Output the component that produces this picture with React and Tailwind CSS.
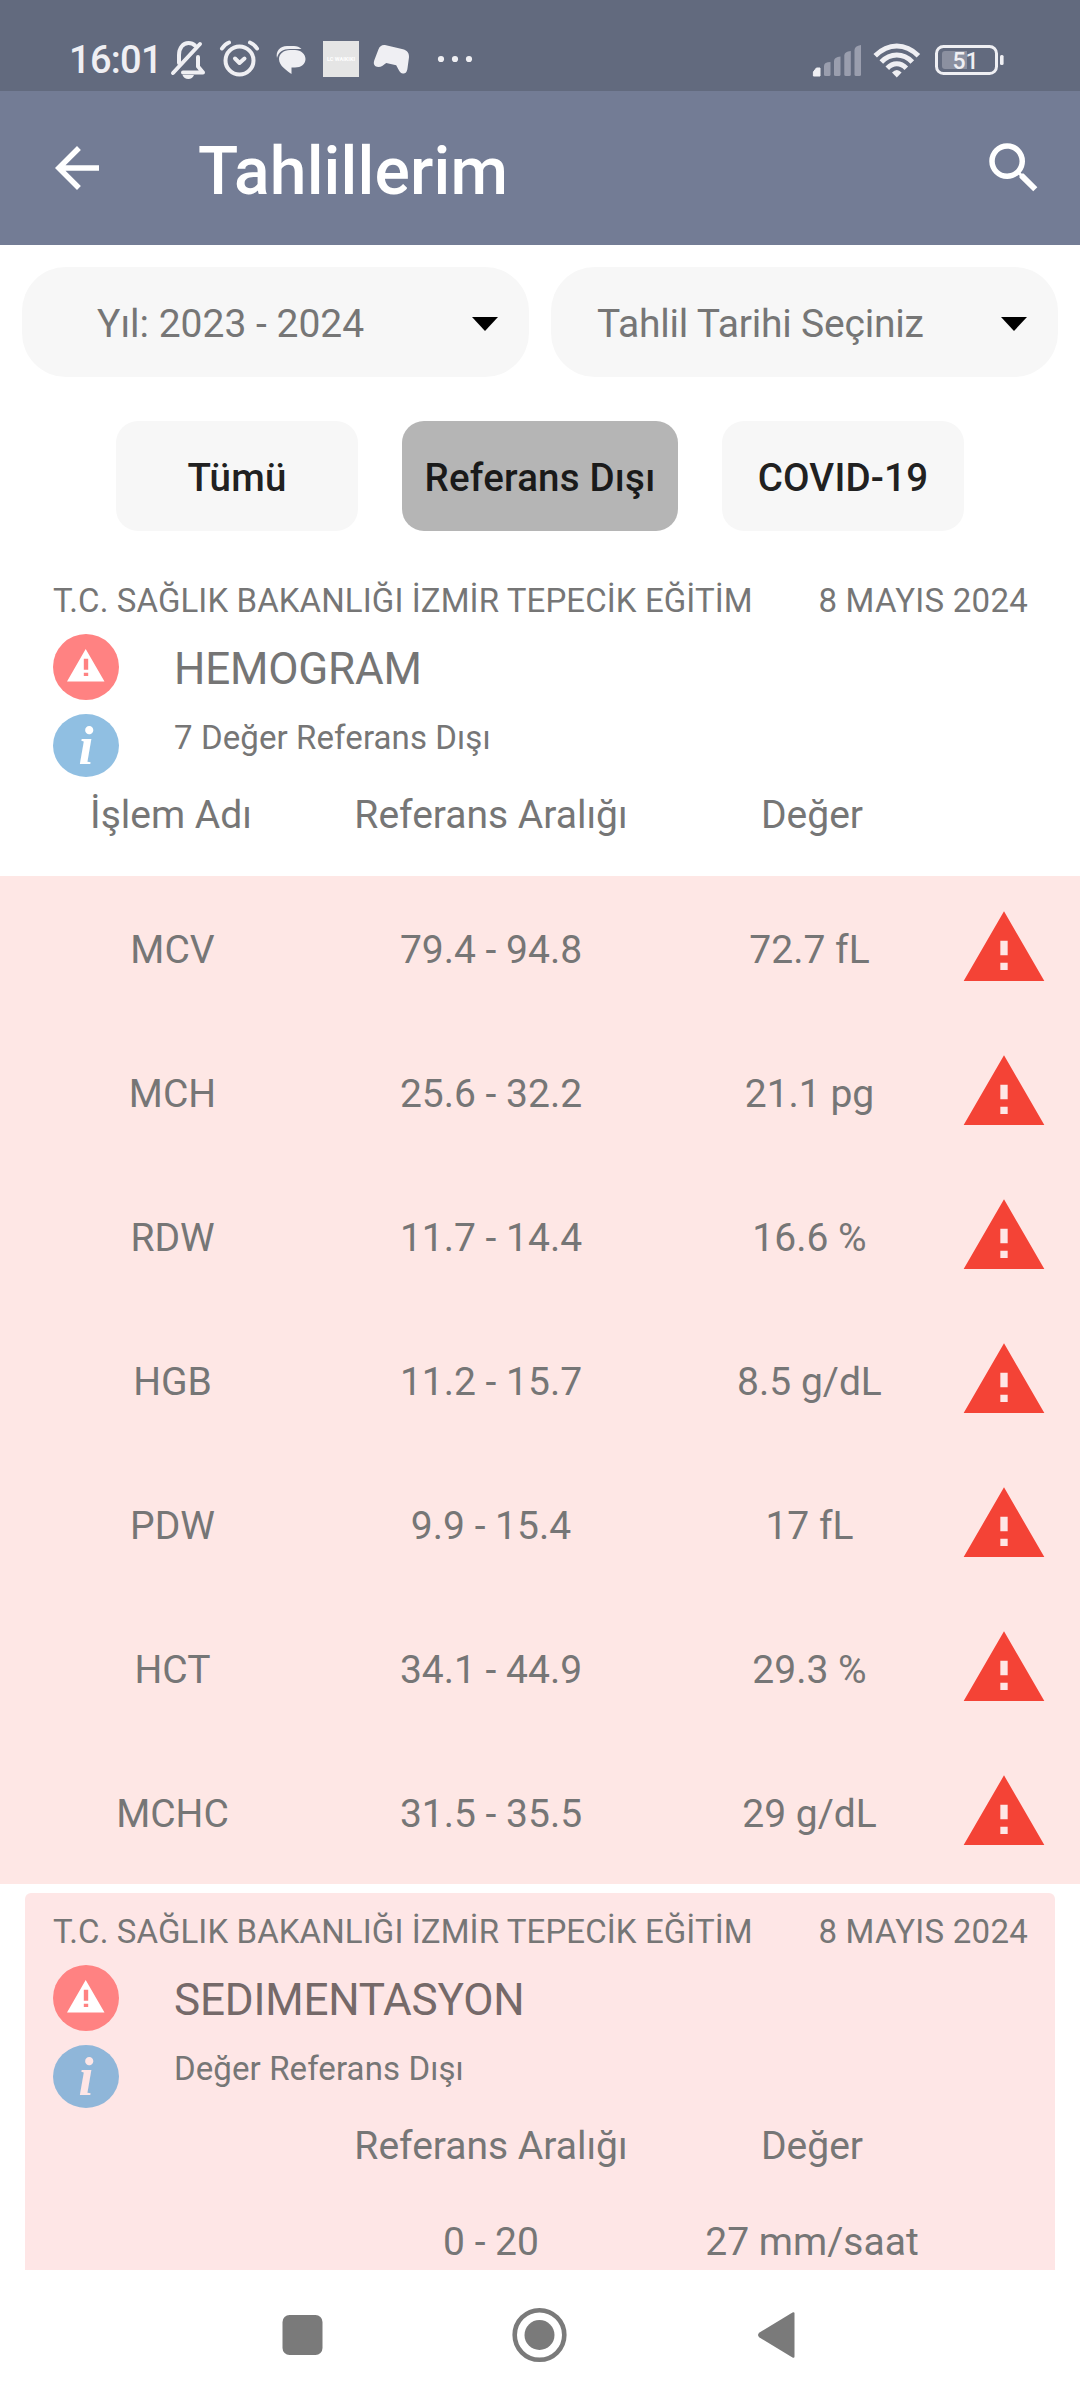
import React, { useState } from "react";
import { MdArrowBack, MdSearch, MdWarning } from "react-icons/md";

const hemogram = [
  { name: "MCV", range: "79.4 - 94.8", value: "72.7 fL" },
  { name: "MCH", range: "25.6 - 32.2", value: "21.1 pg" },
  { name: "RDW", range: "11.7 - 14.4", value: "16.6 %" },
  { name: "HGB", range: "11.2 - 15.7", value: "8.5 g/dL" },
  { name: "PDW", range: "9.9 - 15.4", value: "17 fL" },
  { name: "HCT", range: "34.1 - 44.9", value: "29.3 %" },
  { name: "MCHC", range: "31.5 - 35.5", value: "29 g/dL" },
];

const StatusIcons = () => (
  <svg width="310" height="44" viewBox="168 38 310 44" fill="#efeff3">
    {/* muted bell */}
    <g fill="none" stroke="#efeff3" strokeWidth="4" strokeLinecap="round" strokeLinejoin="round">
      <path d="M179 63V55c0-7 4-12 9.500-12 3 0 5 1 6.500 2.500" />
      <path d="M173 73L200 44" />
      <path d="M183 72.500h20l-5-6V57" />
    </g>
    <path d="M182.500 75h11.500c-1 2.500-3 4-5.700 4s-4.800-1.500-5.800-4z" />
    {/* alarm */}
    <g fill="none" stroke="#efeff3" strokeWidth="4" strokeLinecap="round" strokeLinejoin="round">
      <circle cx="239.500" cy="60.500" r="14" />
      <path d="M235 58.500l4.500 4.500 5-4.500" />
      <path d="M222 48.500q3-4.500 7-6M257 48.500q-3-4.500-7-6" />
    </g>
    {/* messages */}
    <path d="M277 58c-1.500-7 3-12 10-12h7c3 0 5.500 1 7.500 3H290c-7 0-11.500 3-13 9z" />
    <path d="M290 50h5c6 0 10.500 4 10.500 9s-4.500 8.500-10.500 8.500h-3.500V74c-4.500-3.500-12.500-8-12.500-15 0-5 4.500-9 11-9z" />
    <rect x="323" y="41" width="36" height="36" fill="#e5e5e5" />
    <text x="341" y="61" fontSize="5.500" textAnchor="middle" textLength="28" fill="#fff" fontFamily="Roboto" fontWeight="700">LC WAIKIKI</text>
    {/* gamepad */}
    <path d="M386 45.200l17 4c4.500 1.300 6.200 4 6 8l-1.500 11c-.6 4-2 5.300-4.500 5.300-2 0-3.200-1.500-4-3l-2.800-5.200-10-2.300-4 3c-2 1.300-5 1.300-6.700.2-2-1.300-2-3.800-1.200-6l4-10.500c1.500-4 4-5.300 7.700-4.500z" />
    <circle cx="441" cy="59" r="3.100" />
    <circle cx="455" cy="59" r="3.100" />
    <circle cx="469" cy="59" r="3.100" />
  </svg>
);

const SystemIcons = () => (
  <svg width="192" height="40" viewBox="812 39 192 40">
    <path d="M813.400 75v-4l3-4h3.600v8z" fill="#efeff3" stroke="#efeff3" strokeLinejoin="round" />
    <g fill="#9a9eae">
      <path d="M824 73.500V65q0-4 6.500-4v12.500q0 1.500-1.500 1.500h-3.500q-1.500 0-1.500-1.500z" />
      <path d="M834 73.500V60q0-4 6.500-4.500v18q0 1.500-1.500 1.500h-3.500q-1.500 0-1.500-1.500z" />
      <path d="M844.300 73.500V54.500q0-4 6.500-4.500v23.500q0 1.500-1.500 1.500h-3.500q-1.500 0-1.500-1.500z" />
      <path d="M854.500 73.500V49q0-4 6.500-5v29.500q0 1.500-1.500 1.500h-3.500q-1.500 0-1.500-1.500z" />
    </g>
    <g fill="none" stroke="#efeff3" strokeWidth="5">
      <path d="M875.200 54.800Q885 45 896.800 45t21.600 9.800" />
      <path d="M881.300 61Q888 54 896.800 54t15.500 7" />
      <path d="M887.300 67.200Q891.500 62.800 896.800 62.800t9.500 4.400" />
    </g>
    <path d="M892 71.500q4.800-5 9.600 0L896.800 76.500z" fill="#efeff3" />
    <rect x="936.500" y="45.500" width="60" height="27" rx="7" fill="none" stroke="#efeff3" strokeWidth="3" />
    <path d="M945 50h22v18h-22q-3 0-3-3V53q0-3 3-3z" fill="#8b90a0" />
    <rect x="1000" y="54" width="3.600" height="10" rx="1.500" fill="#efeff3" />
    <text x="965.500" y="68" fontSize="23" fontWeight="500" fontFamily="Roboto" textAnchor="middle" fill="#efeff3">51</text>
  </svg>
);

const Picker = ({ label, className }) => (
  <div className={`flex h-[110px] w-[507px] items-center justify-between rounded-[44px] bg-[#f7f7f7] pr-[31px] ${className}`}>
    <span className="mt-[4px] leading-[44px]">{label}</span>
    <svg width="26" height="14" viewBox="0 0 26 14" className="mt-[3px]">
      <path d="M0 0h26L13 14z" />
    </svg>
  </div>
);

const FilterButton = ({ label, active, onClick, className }) => (
  <button
    onClick={onClick}
    className={`h-[110px] whitespace-nowrap rounded-[22px] pt-[3px] text-[38.500px] font-medium leading-[44px] tracking-[0.200px] ${active ? "bg-[#b5b5b5] text-[#1a1a1a]" : "bg-[#f7f7f7] text-[#212121]"} ${className}`}
  >
    {label}
  </button>
);

const WarnBadge = () => (
  <svg width="66" height="66" viewBox="0 0 66 66">
    <circle cx="33" cy="33" r="33" fill="#ff8282" />
    <path fill="#fff" fillRule="evenodd" d="M14 47.500L32.700 15 51.500 47.500zM30.800 24.700v11h4.400v-11zM30.800 38.700v3.300h4.400v-3.300z" />
  </svg>
);

const InfoBadge = ({ color, ink }) => (
  <svg width="66" height="63" viewBox="0 0 66 63">
    <ellipse cx="33" cy="31.500" rx="33" ry="31.500" fill={color} />
    <text x="33" y="49.500" textAnchor="middle" fontFamily="Liberation Serif" fontStyle="italic" fontWeight="700" fontSize="54" fill={ink}>i</text>
  </svg>
);

const TestHeader = ({ title, subtitle, infoColor, infoInk, titleColor }) => (
  <div className="pl-[53px] pr-[52px]">
    <div className="flex h-[40px] items-center justify-between pt-[3px] text-[33px] leading-[40px]">
      <span className="tracking-[0.100px]">T.C. SAĞLIK BAKANLIĞI İZMİR TEPECİK EĞİTİM</span>
      <span className="tracking-[0.250px]">8 MAYIS 2024</span>
    </div>
    <div className="mt-[15px] flex gap-[55px]">
      <div className="flex flex-col gap-[14px]">
        <WarnBadge />
        <InfoBadge color={infoColor} ink={infoInk} />
      </div>
      <div className="flex flex-col">
        <span className={`mt-[9px] text-[44px] leading-[52px] tracking-[-0.200px] ${titleColor}`}>{title}</span>
        <span className="mt-[23px] text-[33px] leading-[40px] tracking-[0.100px]">{subtitle}</span>
      </div>
    </div>
  </div>
);

const HeaderColumns = ({ first, second, third, className }) => (
  <div className={`flex items-center pl-[12px] text-center leading-[44px] ${className}`}>
    <span className="w-[318px]">{first}</span>
    <span className="w-[322px]">{second}</span>
    <span className="w-[320px]">{third}</span>
  </div>
);

const ResultRow = ({ name, range, value }) => (
  <div className="flex h-[144px] items-center pl-[13px] text-center leading-[44px]">
    <span className="w-[319px] pt-[3px]">{name}</span>
    <span className="w-[318px] pt-[3px]">{range}</span>
    <span className="w-[319px] pt-[3px]">{value}</span>
    <MdWarning size={88} className="-ml-[9px] shrink-0 text-[#f44336]" />
  </div>
);

const App = () => {
  const [filter, setFilter] = useState("Referans Dışı");

  return (
    <div className="flex h-[2400px] w-[1080px] flex-col overflow-hidden bg-white font-[Roboto,sans-serif] text-[39px] text-[#767676]">
      <div className="flex h-[91px] shrink-0 items-center bg-[#626a7e] pl-[69px] pr-[76px] pt-[28px]">
        <span className="w-[99px] text-[38px] font-medium leading-[44px] tracking-[-0.700px] text-[#efeff3]">16:01</span>
        <StatusIcons />
        <span className="ml-auto">
          <SystemIcons />
        </span>
      </div>

      <header className="flex h-[154px] shrink-0 items-center bg-[#737c95] pl-[44px] pr-[33px] text-white">
        <MdArrowBack size={66} />
        <h1 className="ml-[88px] mt-[8px] text-[66px] font-medium leading-[76px] tracking-[0.150px]">Tahlillerim</h1>
        <MdSearch size={66} className="ml-auto" />
      </header>

      <div className="mt-[22px] flex gap-[22px] px-[22px]">
        <Picker label="Yıl: 2023 - 2024" className="pl-[75px]" />
        <Picker label="Tahlil Tarihi Seçiniz" className="pl-[46px] tracking-[-0.200px]" />
      </div>

      <div className="mt-[44px] flex justify-center gap-[44px]">
        <FilterButton label="Tümü" active={filter === "Tümü"} onClick={() => setFilter("Tümü")} className="w-[242px]" />
        <FilterButton label="Referans Dışı" active={filter === "Referans Dışı"} onClick={() => setFilter("Referans Dışı")} className="w-[276px]" />
        <FilterButton label="COVID-19" active={filter === "COVID-19"} onClick={() => setFilter("COVID-19")} className="w-[242px]" />
      </div>

      <section className="mt-[48px] h-[297px] shrink-0">
        <TestHeader title="HEMOGRAM" subtitle="7 Değer Referans Dışı" infoColor="#90bfe2" infoInk="#fff" titleColor="text-[#757575]" />
        <HeaderColumns first="İşlem Adı" second="Referans Aralığı" third="Değer" className="mt-[16px]" />
      </section>

      <section className="shrink-0 bg-[#fee7e5]">
        {hemogram.map((row) => (
          <ResultRow key={row.name} {...row} />
        ))}
      </section>

      <section className="mx-[25px] mt-[9px] h-[377px] shrink-0 rounded-t-[6px] bg-[#fee6e6] pt-[17px]">
        <div className="-mx-[25px]">
          <TestHeader title="SEDIMENTASYON" subtitle="Değer Referans Dışı" infoColor="#8fb6d9" infoInk="#fee6e6" titleColor="text-[#756969]" />
          <HeaderColumns second="Referans Aralığı" third="Değer" className="mt-[16px]" />
          <HeaderColumns second="0 - 20" third="27 mm/saat" className="mt-[52px]" />
        </div>
      </section>

      <nav className="flex h-[130px] shrink-0 items-center justify-center">
        <svg width="520" height="60" viewBox="280 2305 520 60" fill="#7a7a7a">
          <rect x="282.500" y="2315" width="40" height="40" rx="7" />
          <circle cx="539.500" cy="2335" r="24.800" fill="none" stroke="#7a7a7a" strokeWidth="4.600" />
          <circle cx="539.500" cy="2335" r="15" />
          <path d="M794.500 2313.500v43q0 2-2 1l-33-20q-3-2.500 0-5l33-20q2-1 2 1z" />
        </svg>
      </nav>
    </div>
  );
};

export default App;
